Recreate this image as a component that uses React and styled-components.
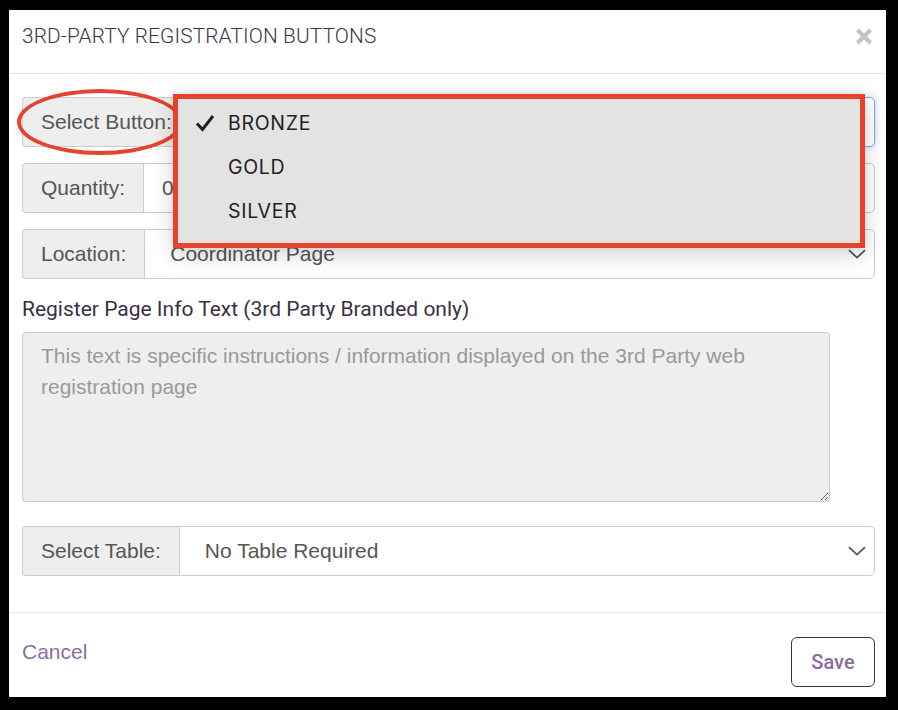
import styled, { createGlobalStyle } from "styled-components";

const GlobalStyle = createGlobalStyle`
  html, body {
    margin: 0;
    padding: 0;
    background: #000;
  }
  * {
    box-sizing: border-box;
  }
`;

const Frame = styled.div`
  width: 898px;
  height: 710px;
  padding: 10px 12px 13px 9px;
  background: #000;
`;

const Modal = styled.div`
  width: 877px;
  height: 687px;
  background: #fff;
  display: flex;
  flex-direction: column;
`;

const Header = styled.div`
  height: 64px;
  padding: 14px 13px 0;
  display: flex;
  align-items: flex-start;
  justify-content: space-between;
  border-bottom: 1px solid #e5e5e5;
`;

const Title = styled.h4`
  margin: 0;
  font-family: Roboto, "Noto Sans", sans-serif;
  font-weight: 300;
  font-size: 20.8px;
  line-height: 24px;
  color: #3d3347;
  letter-spacing: 0.15px;
`;

const Close = styled.button`
  border: 0;
  background: none;
  padding: 0;
  margin: 2px -1px 0 0;
  width: 20px;
  height: 20px;
  display: flex;
  align-items: center;
  justify-content: center;
  cursor: pointer;
`;

const Body = styled.div`
  flex: 1;
  padding: 23px 11px 0 13px;
  display: flex;
  flex-direction: column;
  border-bottom: 1px solid #e8e8e8;
`;

const Group = styled.div`
  position: relative;
  display: flex;
  height: 50px;
  margin-top: ${(p) => p.$mt || 0}px;
  font-family: "Liberation Sans", Arial, sans-serif;
  font-size: 21px;
  color: #555;
`;

const Addon = styled.div`
  display: flex;
  align-items: center;
  padding: 0 18px;
  background: #eee;
  border: 1px solid #ccc;
  border-right: 0;
  border-radius: 4px 0 0 4px;
  white-space: nowrap;
`;

const Field = styled.div`
  flex: 1;
  display: flex;
  align-items: center;
  justify-content: space-between;
  padding: 0 8px 0 ${(p) => (p.$select ? 25 : 18)}px;
  border: 1px solid ${(p) => (p.$focus ? "#7fa9e2" : "#ccc")};
  border-radius: 0 5px 5px 0;
  background: #fff;
  box-shadow: ${(p) =>
    p.$focus ? "0 0 6px rgba(102, 155, 225, 0.45)" : "none"};
`;

const Chevron = () => (
  <svg width="18" height="10" viewBox="0 0 18 10" fill="none">
    <path d="M1 1.2 L9 8.6 L17 1.2" stroke="#555" strokeWidth="1.8" />
  </svg>
);

const Ring = styled.div`
  position: absolute;
  left: -5px;
  top: -8px;
  width: 166px;
  height: 66px;
  border: 4px solid #e5432f;
  border-radius: 50%;
  pointer-events: none;
`;

const Menu = styled.ul`
  position: absolute;
  left: 151px;
  top: -3px;
  width: 692px;
  height: 154px;
  margin: 0;
  padding: 2px 0 0;
  list-style: none;
  background: #e3e3e3;
  border: 5px solid #e8412c;
  box-shadow: 0 6px 22px rgba(0, 0, 0, 0.18), 0 0 6px rgba(0, 0, 0, 0.06);
  z-index: 2;
`;

const Option = styled.li`
  height: 44px;
  display: flex;
  align-items: center;
  padding-left: 17px;
  font-family: Inter, Roboto, sans-serif;
  font-size: 19.5px;
  letter-spacing: 0.7px;
  color: #1f1f1f;
`;

const Tick = styled.span`
  width: 33px;
  display: flex;
  align-items: center;
`;

const Label = styled.label`
  margin-top: 18px;
  font-family: Roboto, "Noto Sans", sans-serif;
  font-size: 21px;
  line-height: 24px;
  color: #3a2f45;
`;

const Info = styled.textarea`
  margin-top: 11px;
  width: 808px;
  height: 170px;
  padding: 7px 18px;
  background: #eee;
  border: 1px solid #ccc;
  border-radius: 4px;
  font-family: "Liberation Sans", Arial, sans-serif;
  font-size: 21px;
  line-height: 31px;
  color: #555;
  resize: vertical;
  outline: none;

  &::placeholder {
    color: #999;
  }
`;

const Footer = styled.div`
  height: 84px;
  padding: 24px 11px 0 13px;
  display: flex;
  justify-content: space-between;
  align-items: flex-start;
`;

const Cancel = styled.a`
  margin-top: 3px;
  font-family: "Liberation Sans", Arial, sans-serif;
  font-size: 21px;
  color: #8d6ca0;
  text-decoration: none;
  cursor: pointer;
`;

const Save = styled.button`
  width: 84px;
  height: 50px;
  border: 1px solid #3d3347;
  border-radius: 6px;
  background: #fff;
  font-family: Roboto, sans-serif;
  font-weight: 500;
  font-size: 20px;
  color: #8a6a9f;
  cursor: pointer;
`;

const options = ["BRONZE", "GOLD", "SILVER"];

export default function App() {
  return (
    <>
      <GlobalStyle />
      <Frame>
        <Modal>
          <Header>
            <Title>3RD-PARTY REGISTRATION BUTTONS</Title>
            <Close aria-label="Close">
              <svg width="18" height="17" viewBox="0 0 18 17">
                <path
                  d="M2.5 2 L15.5 15 M15.5 2 L2.5 15"
                  stroke="#c4c4c4"
                  strokeWidth="4.2"
                />
              </svg>
            </Close>
          </Header>
          <Body>
            <Group>
              <Addon>Select Button:</Addon>
              <Field $select $focus>
                <span />
                <Chevron />
              </Field>
              <Ring />
              <Menu>
                {options.map((o, i) => (
                  <Option key={o}>
                    <Tick>
                      {i === 0 && (
                        <svg width="20" height="18" viewBox="0 0 20 18">
                          <path
                            d="M2 9.5 L7.5 15.5 L18 2"
                            stroke="#1f1f1f"
                            strokeWidth="3"
                            fill="none"
                          />
                        </svg>
                      )}
                    </Tick>
                    {o}
                  </Option>
                ))}
              </Menu>
            </Group>
            <Group $mt={16}>
              <Addon>Quantity:</Addon>
              <Field>
                <span>0</span>
              </Field>
            </Group>
            <Group $mt={16}>
              <Addon>Location:</Addon>
              <Field $select>
                <span>Coordinator Page</span>
                <Chevron />
              </Field>
            </Group>
            <Label>Register Page Info Text (3rd Party Branded only)</Label>
            <Info
              readOnly
              placeholder="This text is specific instructions / information displayed on the 3rd Party web registration page"
            />
            <Group $mt={24}>
              <Addon>Select Table:</Addon>
              <Field $select>
                <span>No Table Required</span>
                <Chevron />
              </Field>
            </Group>
          </Body>
          <Footer>
            <Cancel>Cancel</Cancel>
            <Save>Save</Save>
          </Footer>
        </Modal>
      </Frame>
    </>
  );
}
